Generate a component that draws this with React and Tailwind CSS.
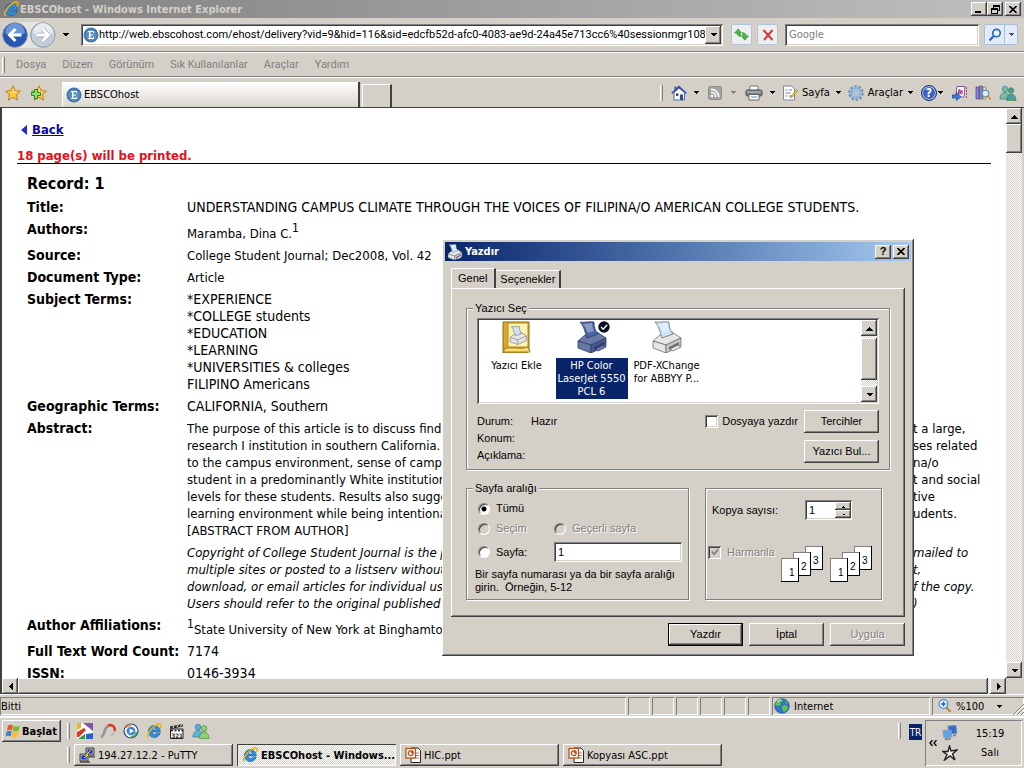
import React, { useState } from 'react';

const raised =
  'bg-[#d4d0c8] shadow-[inset_-1px_-1px_0_#404040,inset_1px_1px_0_#fff,inset_-2px_-2px_0_#808080]';
const sunken =
  'bg-white shadow-[inset_1px_1px_0_#808080,inset_-1px_-1px_0_#fff,inset_2px_2px_0_#404040,inset_-2px_-2px_0_#d4d0c8]';
const pane = 'shadow-[inset_1px_1px_0_#808080,inset_-1px_-1px_0_#fff]';
const dither = 'bg-[repeating-conic-gradient(#fff_0_25%,#d4d0c8_0_50%)] bg-[length:2px_2px]';
const disabledText = 'text-[#808080] [text-shadow:1px_1px_0_#fff]';

const subjects = [
  '*EXPERIENCE',
  '*COLLEGE students',
  '*EDUCATION',
  '*LEARNING',
  '*UNIVERSITIES & colleges',
  'FILIPINO Americans',
];

// each line is split where the print dialog stops covering it
const abstractLines = [
  ['The purpose of this article is to discuss findings from a study of Filipina/o American students a', 't a large,'],
  ['research I institution in southern California. The findings reveal themes from their respon', 'ses related'],
  ['to the campus environment, sense of campus involvement and the experience of a Filipi', 'na/o'],
  ['student in a predominantly White institution, as well as the need for greater suppor', 't and social'],
  ['levels for these students. Results also suggest that campuses can create a more effec', 'tive'],
  ['learning environment while being intentional about the needs of their college st', 'udents.'],
  ['[ABSTRACT FROM AUTHOR]', ''],
];

const copyrightLines = [
  ['Copyright of College Student Journal is the property of its publisher and may not be copied or e', 'mailed to'],
  ["multiple sites or posted to a listserv without the holder's express permission. Users may prin", 't,'],
  ['download, or email articles for individual use. No warranty is given about the accuracy o', 'f the copy.'],
  ['Users should refer to the original published version for the full abstract. (Copyright applies.', ')'],
];

const Caret = ({ dir = 'down', className = 'text-black' }) => {
  const shapes = {
    down: 'M0 2h7L3.5 5.5z',
    up: 'M0 5.5h7L3.5 2z',
    left: 'M5.5 0v7L2 3.5z',
    right: 'M2 0v7l3.5-3.5z',
  };
  return (
    <svg viewBox="0 0 7 7" className={`h-[7px] w-[7px] shrink-0 ${className}`} shapeRendering="crispEdges">
      <path d={shapes[dir]} fill="currentColor" />
    </svg>
  );
};

const Grip = () => <span className="h-4 w-[3px] shrink-0 self-center border-l border-r border-l-white border-r-[#808080]" />;

const ScrollButton = ({ dir, label }) => (
  <button type="button" aria-label={label} className={`flex h-4 w-4 shrink-0 items-center justify-center ${raised}`}>
    <Caret dir={dir} />
  </button>
);

const IeIcon = ({ className = 'h-4 w-4' }) => (
  <svg viewBox="0 0 16 16" className={`shrink-0 ${className}`}>
    <path
      d="M14.2 10.2c-.8 2.6-3 4.3-5.8 4.3-3.4 0-6-2.500-6-6s2.600-6 6-6c3.600 0 6 2.700 5.900 6.600H6c.1 1.500 1.100 2.500 2.500 2.500 1 0 1.700-.5 2.100-1.400zM6.100 7h4.600C10.500 5.700 9.700 5 8.500 5 7.200 5 6.300 5.700 6.100 7z"
      fill="#2d8fe0"
      stroke="#1257a8"
      strokeWidth=".6"
    />
    <path d="M2.300 14.700C.2 12.500 4.200 6 9 2.800c3-2 5.600-2.400 6-.8.300 1-.3 2.300-1 3.400" fill="none" stroke="#f0b400" strokeWidth="1.500" />
  </svg>
);

const EbscoIcon = () => (
  <svg viewBox="0 0 16 16" className="h-4 w-4 shrink-0">
    <circle cx="8" cy="8" r="7.500" fill="#3f76ae" />
    <circle cx="8" cy="8" r="5.800" fill="#5b8fc0" />
    <path d="M5 4h6v2h-1V5H7.500v2.500H10v1H7.500V11H10v-1h1v2H5v-1h1V5H5z" fill="#fff" />
  </svg>
);

const PrinterIcon = ({ body = '#e6e6e4', side = '#c4c6ca', edge = '#6a6e76', paper = '#cfe4fa', className = 'h-4 w-4' }) => (
  <svg viewBox="0 0 32 32" className={`shrink-0 ${className}`}>
    <path d="M2 20l7-6 12-3 9 6-15 7z" fill={body} stroke={edge} strokeWidth=".8" strokeLinejoin="round" />
    <path d="M2 20l13 4v8L2 27z" fill={body} stroke={edge} strokeWidth=".8" strokeLinejoin="round" />
    <path d="M15 24l15-7v8l-15 7z" fill={side} stroke={edge} strokeWidth=".8" strokeLinejoin="round" />
    <path d="M4 1c5 1 9-1 14 0 0 5 1 9 4 12l-11 4C9 11 8 5 4 1z" fill={paper} stroke={edge} strokeWidth=".8" />
    <path d="M7 3c4 0 6-1 9-1 0 3 1 6 2 8l-6 2C10 8 9 5 7 3z" fill="#fff" opacity=".35" />
    <path d="M18 26l10-5v3l-10 5z" fill={edge} />
    <path d="M19 28l8-4 3 2-8 4z" fill={body} stroke={edge} strokeWidth=".8" />
  </svg>
);

const FlatPrinter = () => (
  <svg viewBox="0 0 18 16" className="h-4 w-[18px] shrink-0">
    <path d="M5 1h8v5H5z" fill="#fff" stroke="#777" />
    <rect x="1" y="5" width="16" height="6" rx="1.500" fill="#7d8186" stroke="#4d5054" />
    <path d="M2 7h14" stroke="#c7cace" />
    <path d="M4 9.500h10V15H4z" fill="#fff" stroke="#666" />
    <path d="M6 12h6" stroke="#4b87d0" />
  </svg>
);

const Star = ({ plus }) => (
  <svg viewBox="0 0 16 16" className="h-4 w-4 shrink-0">
    <path d="M8 .8l2.200 4.900 5.200.5-3.900 3.600 1.100 5.300L8 12.400l-4.600 2.700 1.100-5.300L.6 6.200l5.200-.5z" fill="#ffc93c" stroke="#b9761a" strokeWidth=".9" />
    <path d="M8 3l1.300 3.500 3 .4-4.300 1z" fill="#fff1b0" />
    {plus && <path d="M3.500 4.500h3v3h3v3h-3v3h-3v-3h-3v-3h3z" fill="#8fe06f" stroke="#247a17" strokeWidth=".9" />}
  </svg>
);

const HomeIcon = () => (
  <svg viewBox="0 0 16 16" className="h-4 w-4 shrink-0">
    <path d="M3 7.500v7.500h10.500V7.500L8 3z" fill="#f3f6fd" stroke="#5a6fa5" />
    <path d="M3.500 1.500h2V6h-2z" fill="#3d5aa8" />
    <path d="M.8 8.500L8 1.700l7.300 6.800" fill="none" stroke="#2f4fae" strokeWidth="1.600" />
    <path d="M9 9.500h3V15H9z" fill="#2b4c9c" />
    <path d="M5 8.500h2.300v2.300H5z" fill="#333" />
  </svg>
);

const RssIcon = () => (
  <svg viewBox="0 0 14 14" className="h-[14px] w-[14px] shrink-0">
    <rect x=".5" y=".5" width="13" height="13" rx="2" fill="#a5a5a3" stroke="#878785" />
    <circle cx="4" cy="10" r="1.300" fill="#fff" />
    <path d="M3 6.200A4.800 4.800 0 0 1 7.800 11M3 3.200A7.800 7.800 0 0 1 10.800 11" fill="none" stroke="#fff" strokeWidth="1.400" />
  </svg>
);

const PageIcon = () => (
  <svg viewBox="0 0 16 16" className="h-4 w-4 shrink-0">
    <path d="M1.500 1h8l3 3v11h-11z" fill="#fff" stroke="#7887a5" />
    <path d="M3.500 5h2M7 5h3M3.500 8h5M3.500 11h2M7 11h3" stroke="#6c7fb0" />
    <path d="M14.500 4.500l-5 6-1 2.500 2.400-1.300 4.800-6z" fill="#f2cf4a" stroke="#8d7420" strokeWidth=".6" />
  </svg>
);

const GearIcon = () => (
  <svg viewBox="0 0 16 16" className="h-4 w-4 shrink-0">
    <circle cx="8" cy="8" r="6.600" fill="none" stroke="#6e93b9" strokeWidth="2.400" strokeDasharray="2.600 1.550" />
    <circle cx="8" cy="8" r="4.500" fill="#d9e6f2" stroke="#8fb2d6" strokeWidth="2.600" />
    <circle cx="8" cy="8" r="2.200" fill="#d4d0c8" stroke="#5f86ad" strokeWidth=".7" />
  </svg>
);

const HelpIcon = () => (
  <span className="flex h-4 w-4 shrink-0 items-center justify-center rounded-full border border-[#16307e] bg-[#3b62bd] text-xs leading-none font-bold text-white ring-1 ring-[#b9c7e8] ring-inset">
    ?
  </span>
);

const MessengerIcon = ({ left = '#5eb0dc', right = '#8fd070' }) => (
  <svg viewBox="0 0 18 16" className="h-4 w-[18px] shrink-0">
    <circle cx="6" cy="4" r="2.800" fill={left} stroke="#38789e" strokeWidth=".7" />
    <path d="M1 14c0-4 2-6.500 5-6.500S10 9 10 14z" fill={left} stroke="#38789e" strokeWidth=".7" />
    <circle cx="12" cy="5.500" r="2.800" fill={right} stroke="#4a8c3b" strokeWidth=".7" />
    <path d="M7.500 15.500c0-4 1.600-6.500 4.500-6.500s5 2.500 5 6.500z" fill={right} stroke="#4a8c3b" strokeWidth=".7" />
  </svg>
);

const ResearchIcon = () => (
  <svg viewBox="0 0 16 16" className="h-4 w-4 shrink-0">
    <path d="M1 2h3v12H1zM4.500 1h3v13h-3z" fill="#8b86c9" stroke="#4a4590" strokeWidth=".7" />
    <path d="M8 2h3v12H8z" fill="#e6e0c6" stroke="#857d58" strokeWidth=".7" />
    <circle cx="10.500" cy="8.500" r="3.400" fill="#d4f0f8" stroke="#5a7f92" />
    <path d="M13 11l2.500 3.500" stroke="#d08a2a" strokeWidth="1.800" />
  </svg>
);

const NoteIcon = () => (
  <svg viewBox="0 0 16 16" className="h-4 w-4 shrink-0">
    <path d="M5 1.500h8L12 12H3.500z" fill="#fff" stroke="#8a4fa0" />
    <path d="M6.500 9.500c0-5 1-6 1.500-3.500v3c1.500-5 2.500-4 2 .5" fill="none" stroke="#a03a9c" strokeWidth="1.200" />
    <path d="M14.500 2v11" stroke="#c05050" strokeDasharray="2 1" />
    <path d="M0 10h4.500V7.500L9 11.500l-4.500 4V13H0z" fill="#3d7be0" stroke="#1c4699" strokeWidth=".7" />
  </svg>
);

const PptIcon = () => (
  <svg viewBox="0 0 16 16" className="h-4 w-4 shrink-0">
    <path d="M6 1h7l2.500 2.500V15.500H6z" fill="#fff" stroke="#222" />
    <path d="M11 6h3M11 8.500h3M11 11h3" stroke="#888" />
    <rect x="1" y="1.500" width="9.500" height="9.500" fill="#fff" stroke="#b8501c" strokeWidth="1.300" />
    <circle cx="5.700" cy="6.200" r="2.400" fill="none" stroke="#b8501c" strokeWidth="1.300" />
    <path d="M5.700 6.200V3.500h2.700v2.700z" fill="#b8501c" />
  </svg>
);

const PuttyIcon = () => (
  <svg viewBox="0 0 16 16" className="h-4 w-4 shrink-0">
    <path d="M7 1h8v7H7z" fill="#b8b8b8" stroke="#222" strokeWidth=".8" />
    <path d="M8.500 2.500h5v4h-5z" fill="#1630c8" />
    <path d="M1 7h8v7H1z" fill="#b8b8b8" stroke="#222" strokeWidth=".8" />
    <path d="M2.500 8.500h5v4h-5z" fill="#1630c8" />
    <path d="M1 14.500h9.500v1.300H1zM10 9h5.500v1.300H10z" fill="#888" stroke="#222" strokeWidth=".5" />
    <path d="M12 3L7 8h2l-4 3" fill="none" stroke="#ffe600" />
  </svg>
);

const WindowsFlag = () => (
  <svg viewBox="0 0 16 16" className="h-4 w-4 shrink-0">
    <path d="M3 2.500c2-1 3.500-.8 5 0L7 7.500c-1.500-.8-3-1-5 0z" fill="#f0582a" />
    <path d="M8.800 2.800c1.800.9 3.500 1 6 0l-1.200 5c-2 1-4 .8-5.800 0z" fill="#7cb93a" />
    <path d="M1.700 8.500c2-1 3.500-.8 5 0l-1 5c-1.500-.8-3-1-5 0z" fill="#3c80d8" />
    <path d="M7.500 8.800c1.800.9 3.500 1 6 0l-1.200 5c-2 1-4 .8-5.800 0z" fill="#f8bf2c" />
  </svg>
);

const PicasaIcon = () => (
  <svg viewBox="0 0 16 16" className="h-4 w-4 shrink-0">
    <path d="M0 0h16v16H0z" fill="#fff" />
    <path d="M0 0h4v5L0 7z" fill="#e8b820" />
    <path d="M6 0h10v8z" fill="#8a52b0" />
    <path d="M0 9l7-4 2 2-7 7H0z" fill="#d8392b" />
    <path d="M1 16l7-5v5z" fill="#2f9a46" />
    <path d="M9 11l7-1v6H9z" fill="#2b62c8" />
  </svg>
);

const SwooshIcon = () => (
  <svg viewBox="0 0 16 16" className="h-4 w-4 shrink-0">
    <path d="M1 14c3-1 3-4 4-7s2-4 4-4" fill="none" stroke="#8d9399" strokeWidth="2.600" />
    <path d="M8 2.500c5-1.500 7.500 2 6.500 5.500" fill="none" stroke="#d8402c" strokeWidth="2.600" />
    <path d="M14.500 8c-.5 2.500-2 4-4 5" fill="none" stroke="#b9bcc0" strokeWidth="2" />
  </svg>
);

const PlayIcon = () => (
  <svg viewBox="0 0 16 16" className="h-4 w-4 shrink-0">
    <circle cx="8" cy="8" r="7" fill="#f2f4f7" stroke="#2b4d8c" strokeWidth="1.200" />
    <path d="M3 4.500A6 6 0 0 1 8 2" fill="none" stroke="#e8852a" strokeWidth="1.800" />
    <path d="M13.500 9A6 6 0 0 1 8 14" fill="none" stroke="#49a64a" strokeWidth="1.800" />
    <circle cx="8" cy="8" r="4.300" fill="#3d7fd8" />
    <path d="M6.600 5.500v5L11 8z" fill="#fff" />
  </svg>
);

const ClapperIcon = () => (
  <svg viewBox="0 0 16 16" className="h-4 w-4 shrink-0">
    <path d="M1.500 6h12.500v9.500H1.500z" fill="#f4f4ee" stroke="#222" />
    <path d="M1 3.500L13.500 1l.5 2.500L1.500 6z" fill="#222" />
    <path d="M4 5l1-2M8 4.200l1-2M11.500 3.500l1-2M3 7.500h10" stroke="#fff" />
    <path d="M2 7.500h12" stroke="#222" strokeWidth="1.500" strokeDasharray="2 1.500" />
    <text x="2.500" y="14.500" fontSize="6" fontWeight="bold" fill="#333">321</text>
  </svg>
);

const GlobeIcon = () => (
  <svg viewBox="0 0 16 16" className="h-4 w-4 shrink-0">
    <circle cx="8" cy="8" r="7.300" fill="#2f74c8" stroke="#1d4b8c" strokeWidth=".7" />
    <path d="M3 3c2-2 5-2 6-1L8 4 6 5l1 2-3 1-3-1zM8 8l4-1 2 2-1 3-3 2-2-3zM11 2l3 3-2 1z" fill="#5cc44a" />
    <path d="M3 4c1-1.500 3-2 4-2" stroke="#d9f2ff" fill="none" />
  </svg>
);

const MagnifierPlus = () => (
  <svg viewBox="0 0 14 14" className="h-[14px] w-[14px] shrink-0">
    <path d="M8 8l4.500 5" stroke="#c08436" strokeWidth="2" />
    <circle cx="5.500" cy="5" r="4.300" fill="#e4f3ff" stroke="#4a90d8" strokeWidth="1.300" />
    <path d="M5.500 2.800v4.400M3.300 5h4.400" stroke="#1d5fc0" strokeWidth="1.400" />
  </svg>
);

const NetworkIcon = () => (
  <svg viewBox="0 0 16 16" className="h-4 w-4 shrink-0">
    <path d="M6 1l8-.5.8 8L7 9z" fill="#2c6fd0" stroke="#7d8ea8" />
    <path d="M1 5.500l8-.5.600 7L2 13z" fill="#5ba4f0" stroke="#8b9bb3" />
    <path d="M3 14.500l6-.8M11 10.500h3" stroke="#777" strokeWidth="1.300" />
  </svg>
);

const StarFigure = () => (
  <svg viewBox="0 0 16 16" className="h-4 w-4 shrink-0">
    <path d="M7.500 1l1.500 5 6-1-4.500 4L13 15l-5-4-5.500 4L5 9.500 1 6.500h5z" fill="#f2f0ea" stroke="#222" strokeWidth="1.400" />
  </svg>
);

const CloseGlyph = () => (
  <svg viewBox="0 0 8 7" className="h-[7px] w-2">
    <path d="M.5 0l7 7M7.500 0l-7 7" stroke="#000" strokeWidth="1.600" />
  </svg>
);

const TitleBar = () => (
  <header className="flex h-[18px] shrink-0 items-center bg-linear-to-r from-[#808080] to-[#c0c0c0] pr-[3px] pl-[3px]">
    <IeIcon />
    <h1 className="ml-px flex-1 font-bold text-[#d4d0c8]">EBSCOhost - Windows Internet Explorer</h1>
    <div className="flex">
      <button type="button" aria-label="Minimize" className={`flex h-[14px] w-4 items-end px-1 pb-[3px] ${raised}`}>
        <span className="h-[2px] w-[6px] bg-black" />
      </button>
      <button type="button" aria-label="Restore" className={`flex h-[14px] w-4 items-center justify-center ${raised}`}>
        <svg viewBox="0 0 9 9" className="h-[9px] w-[9px]" shapeRendering="crispEdges">
          <path d="M2 0h7v6H7V5h1V2H3v1H2zM0 3h7v6H0zM1 5v3h5V5z" fillRule="evenodd" />
        </svg>
      </button>
      <button type="button" aria-label="Close" className={`ml-[2px] flex h-[14px] w-4 items-center justify-center ${raised}`}>
        <CloseGlyph />
      </button>
    </div>
  </header>
);

const NavBar = () => (
  <nav className="flex h-[34px] shrink-0 items-center border-b border-[#808080] pr-[6px] pl-[2px]">
    <div className="flex items-center gap-[2px] rounded-full bg-[#e6e4df]">
      <button type="button" aria-label="Back">
        <svg viewBox="0 0 26 26" className="h-[26px] w-[26px]">
          <circle cx="13" cy="13" r="12.300" fill="#2558b4" stroke="#7d8798" />
          <path d="M3 11a10 10 0 0 1 20 0c-5 3-15 3-20 0z" fill="#7ca8e4" opacity=".8" />
          <path d="M13.500 7L7.500 13l6 6M8 13h11.500" fill="none" stroke="#fff" strokeWidth="3" />
        </svg>
      </button>
      <button type="button" aria-label="Forward">
        <svg viewBox="0 0 26 26" className="h-[26px] w-[26px]">
          <circle cx="13" cy="13" r="12.300" fill="#c3cedb" stroke="#8d959f" />
          <path d="M3 11a10 10 0 0 1 20 0c-5 3-15 3-20 0z" fill="#e6ebf0" />
          <path d="M12.500 7l6 6-6 6M18 13H6.500" fill="none" stroke="#a3adb9" strokeWidth="4.400" />
          <path d="M12.500 7l6 6-6 6M18 13H6.500" fill="none" stroke="#fff" strokeWidth="3" />
        </svg>
      </button>
    </div>
    <button type="button" aria-label="Recent pages" className="mr-3 ml-[6px]"><Caret /></button>
    <div className={`flex h-[22px] min-w-0 flex-1 items-center p-[2px] ${sunken}`}>
      <EbscoIcon />
      <input
        aria-label="Address"
        readOnly
        value="http://web.ebscohost.com/ehost/delivery?vid=9&hid=116&sid=edcfb52d-afc0-4083-ae9d-24a45e713cc6%40sessionmgr108"
        className="min-w-0 flex-1 bg-transparent font-[Roboto,sans-serif] outline-none"
      />
      <button type="button" aria-label="Address list" className={`flex h-[18px] w-4 shrink-0 items-center justify-center ${raised}`}>
        <Caret />
      </button>
    </div>
    <button type="button" aria-label="Refresh" className="ml-2 flex h-[21px] w-[21px] items-center justify-center rounded-[2px] border border-[#b4c4d6] bg-[#eceef0]">
      <svg viewBox="0 0 16 16" className="h-[15px] w-[15px]">
        <path d="M4.500 2L.5 6.500H3c0 2 1.500 3.500 4 3.500V7.500c-1 0-1.500-.3-1.500-1H8z" fill="#4cb944" stroke="#23801f" strokeWidth=".6" />
        <path d="M11.500 14l4-4.500H13C13 7.500 11.500 6 9 6v2.500c1 0 1.500.3 1.500 1H8z" fill="#4cb944" stroke="#23801f" strokeWidth=".6" />
      </svg>
    </button>
    <button type="button" aria-label="Stop" className="ml-[5px] flex h-[21px] w-[21px] items-center justify-center rounded-[2px] border border-[#b4c4d6] bg-[#eceef0]">
      <svg viewBox="0 0 12 12" className="h-3 w-3"><path d="M1.500 1l9 10M10.500 1L2 11" stroke="#d03a3a" strokeWidth="2" /></svg>
    </button>
    <input
      type="text"
      aria-label="Search"
      placeholder="Google"
      className={`ml-[7px] h-[22px] w-[194px] px-1 outline-none placeholder:text-[#808080] ${sunken}`}
    />
    <div className="ml-[5px] flex h-[21px] rounded-[2px] border border-[#a9bfdc] bg-[#e3ebf6]">
      <button type="button" aria-label="Run search" className="flex w-5 items-center justify-center border-r border-[#a9bfdc]">
        <svg viewBox="0 0 14 14" className="h-[14px] w-[14px]">
          <circle cx="8.500" cy="5" r="3.700" fill="#f4f9ff" stroke="#2d66c4" strokeWidth="1.700" />
          <path d="M5.700 8L1.500 12.500" stroke="#2d66c4" strokeWidth="2.200" />
        </svg>
      </button>
      <button type="button" aria-label="Search options" className="flex w-3 items-center justify-center">
        <Caret className="scale-75 text-[#2d5aa0]" />
      </button>
    </div>
  </nav>
);

const MenuBar = () => (
  <div className="flex h-[25px] shrink-0 items-center border-t border-b border-t-white border-b-[#808080] pl-[2px]">
    <Grip />
    <div className="ml-[11px] flex gap-4 font-[Roboto,sans-serif] text-[#808080]">
      {['Dosya', 'Düzen', 'Görünüm', 'Sık Kullanılanlar', 'Araçlar', 'Yardım'].map((item) => (
        <button type="button" key={item}>{item}</button>
      ))}
    </div>
  </div>
);

const TabBar = () => (
  <div className="flex h-[30px] shrink-0 items-stretch border-t border-white pr-[7px] pl-[5px]">
    <div className="flex items-center gap-[10px]">
      <button type="button" aria-label="Favorites"><Star /></button>
      <button type="button" aria-label="Add favorite"><Star plus /></button>
    </div>
    <button
      type="button"
      className="mt-1 ml-[15px] flex w-[298px] items-center gap-[2px] border-r-2 border-[#404040] bg-linear-to-b from-white to-[#d9d6cf] pl-1 shadow-[inset_1px_1px_0_#fff]"
    >
      <EbscoIcon />
      EBSCOhost
    </button>
    <button type="button" aria-label="New tab" className="mt-[6px] ml-[2px] w-[30px] border-t border-r-2 border-l border-t-white border-r-[#404040] border-l-white" />
    <div className="ml-auto flex items-center">
      <Grip />
      <button type="button" className="ml-2 flex items-center gap-[6px]" aria-label="Home"><HomeIcon /><Caret className="scale-75 text-black" /></button>
      <button type="button" className="ml-2 flex items-center gap-2" aria-label="Feeds"><RssIcon /><Caret className="scale-75 text-[#808080]" /></button>
      <button type="button" className="ml-2 flex items-center gap-[6px]" aria-label="Print"><FlatPrinter /><Caret className="scale-75 text-black" /></button>
      <button type="button" className="ml-[6px] flex items-center gap-[4px]"><PageIcon />Sayfa<Caret className="ml-px scale-75 text-black" /></button>
      <button type="button" className="ml-[6px] flex items-center gap-[4px]"><GearIcon />Araçlar<Caret className="scale-75 text-black" /></button>
      <button type="button" className="ml-[7px] flex items-center" aria-label="Help"><HelpIcon /><Caret className="scale-75 text-black" /></button>
      <button type="button" className="ml-2" aria-label="Notes"><NoteIcon /></button>
      <button type="button" className="ml-[7px]" aria-label="Research"><ResearchIcon /></button>
      <button type="button" className="ml-2" aria-label="Messenger"><MessengerIcon left="#7cbfa0" right="#4a9aa8" /></button>
    </div>
  </div>
);

const Lines = ({ lines }) =>
  lines.map(([head, tail]) => (
    <div key={head} className="flex whitespace-nowrap">
      <span className="min-w-0 flex-1 overflow-hidden">{head}</span>
      <span className="w-[78px] shrink-0">{tail}</span>
    </div>
  ));

const Row = ({ label, size = 'text-[13px]', children }) => (
  <tr className="align-top">
    <th scope="row" className="w-40 p-0 pb-[5px] text-left font-bold whitespace-nowrap">{label}</th>
    <td className="p-0 pb-[5px]">
      <div className={`leading-[17px] ${size}`}>{children}</div>
    </td>
  </tr>
);

const RecordPage = () => (
  <main className="min-w-0 flex-1 overflow-hidden bg-white px-[15px] pt-[13px] text-[14px] leading-[17px]">
    <a href="#back" className="flex items-center gap-[5px] pl-1 text-[13px] leading-[17px] font-bold text-[#0a0aa0]">
      <svg viewBox="0 0 6 10" className="h-[10px] w-[6px]"><path d="M6 0v10L0 5z" fill="#2a2ad0" /></svg>
      <span className="underline">Back</span>
    </a>
    <p className="mt-[10px] border-b border-black text-[13px] leading-[15px] font-bold text-[#e01020]">18 page(s) will be printed.</p>
    <div className="pl-[10px]">
      <h2 className="pt-[10px] pb-[5px] text-base leading-5 font-bold">Record: 1</h2>
      <table className="w-full border-collapse">
        <tbody>
          <Row label="Title:" size="text-[14px]">
            UNDERSTANDING CAMPUS CLIMATE THROUGH THE VOICES OF FILIPINA/O AMERICAN COLLEGE STUDENTS.
          </Row>
          <Row label="Authors:">
            <div className="pt-1">Maramba, Dina C.<sup className="text-xs leading-none">1</sup></div>
          </Row>
          <Row label="Source:">College Student Journal; Dec2008, Vol. 42</Row>
          <Row label="Document Type:">Article</Row>
          <Row label="Subject Terms:" size="text-[14px]">
            {subjects.map((subject) => (
              <div key={subject}>{subject}</div>
            ))}
          </Row>
          <Row label="Geographic Terms:" size="text-[14px]">CALIFORNIA, Southern</Row>
          <Row label="Abstract:"><Lines lines={abstractLines} /></Row>
          <Row label=""><div className="italic"><Lines lines={copyrightLines} /></div></Row>
          <Row label="Author Affiliations:">
            <div className="pt-1"><sup className="text-xs leading-none">1</sup>State University of New York at Binghamton</div>
          </Row>
          <Row label="Full Text Word Count:" size="text-[14px]">7174</Row>
          <Row label="ISSN:" size="text-[14px]">0146-3934</Row>
        </tbody>
      </table>
    </div>
  </main>
);

const StatusBar = () => (
  <footer className="flex h-[24px] shrink-0 items-stretch gap-[2px] border-t border-b-2 border-white pt-[2px] pb-px">
    <div className={`flex flex-1 items-center pl-px ${pane}`}>Bitti</div>
    {[0, 1, 2, 3, 4, 5].map((n) => (
      <div key={n} className={`w-[22px] ${pane}`} />
    ))}
    <div className={`flex w-[158px] items-center gap-1 pl-[2px] ${pane}`}><GlobeIcon />Internet</div>
    <button type="button" className={`flex w-[92px] items-center gap-1 pl-[6px] ${pane}`}>
      <MagnifierPlus />
      %100
      <Caret className="ml-2 scale-75 text-black" />
      <svg viewBox="0 0 12 12" className="mt-auto ml-auto h-3 w-3">
        <path d="M1 12L12 1M5 12l7-7M9 12l3-3" stroke="#808080" />
        <path d="M2.200 12L12 2.200M6.200 12L12 6.200" stroke="#fff" />
      </svg>
    </button>
  </footer>
);

const tasks = [
  { title: '194.27.12.2 - PuTTY', icon: <PuttyIcon /> },
  { title: 'EBSCOhost - Windows...', icon: <IeIcon />, active: true },
  { title: 'HIC.ppt', icon: <PptIcon /> },
  { title: 'Kopyası ASC.ppt', icon: <PptIcon /> },
];

const Taskbar = () => (
  <div className="flex h-[50px] shrink-0 items-start py-[2px] pr-[2px] pl-[2px]">
    <button type="button" className={`flex h-[22px] w-[59px] items-center gap-[1px] pl-[3px] font-bold ${raised}`}>
      <WindowsFlag />
      Başlat
    </button>
    <div className="ml-[6px] flex flex-1 flex-col gap-[2px]">
      <div className="flex h-[22px] items-center gap-[7px]">
        <Grip />
        <PicasaIcon />
        <SwooshIcon />
        <PlayIcon />
        <IeIcon />
        <ClapperIcon />
        <MessengerIcon />
      </div>
      <div className="flex h-[22px] items-stretch gap-1">
        <Grip />
        {tasks.map((task) => (
          <button
            type="button"
            key={task.title}
            className={`flex w-[159px] items-center gap-[3px] pl-[5px] ${
              task.active ? `font-bold shadow-[inset_1px_1px_0_#404040,inset_-1px_-1px_0_#fff] ${dither}` : raised
            }`}
          >
            {task.icon}
            <span className="whitespace-nowrap">{task.title}</span>
          </button>
        ))}
      </div>
    </div>
    <div className="flex h-[22px] items-center"><Grip /></div>
    <span className="mt-[4px] ml-2 flex h-4 w-[13px] items-center justify-center overflow-hidden bg-[#0a246a] text-[10px] text-white">TR</span>
    <div className={`ml-[3px] flex h-[46px] w-[97px] items-center pl-1 ${pane}`}>
      <button type="button" aria-label="Show hidden icons" className="w-2">
        <svg viewBox="0 0 8 6" className="h-[6px] w-2"><path d="M3.500 0L1 3l2.500 3M7.500 0L5 3l2.500 3" fill="none" stroke="#000" strokeWidth="1.300" /></svg>
      </button>
      <div className="ml-[5px] flex flex-col gap-1"><NetworkIcon /><StarFigure /></div>
      <div className="flex flex-1 flex-col items-center gap-[6px]">
        <span>15:19</span>
        <span>Salı</span>
      </div>
    </div>
  </div>
);

const Button = ({ children, primary, ...rest }) => (
  <button
    type="button"
    className={`h-[23px] w-[75px] text-center disabled:text-[#808080] disabled:[text-shadow:1px_1px_0_#fff] ${raised} ${
      primary ? 'border border-black' : ''
    }`}
    {...rest}
  >
    {children}
  </button>
);

const Radio = ({ label, ...rest }) => (
  <label className="flex items-center gap-[6px]">
    <input
      type="radio"
      name="range"
      className="h-3 w-3 appearance-none rounded-full border border-[#808080] border-r-white border-b-white bg-white shadow-[inset_1px_1px_0_#404040] checked:bg-[radial-gradient(#000_2px,#fff_3px)] disabled:bg-[#d4d0c8]"
      {...rest}
    />
    <span className={rest.disabled ? disabledText : ''}>{label}</span>
  </label>
);

const groupBox = 'border border-[#808080] shadow-[1px_1px_0_#fff,inset_1px_1px_0_#fff]';

const Pages = () => (
  <svg viewBox="0 0 42 36" className="h-9 w-[42px]" shapeRendering="crispEdges">
    {[
      [24, 0, '3'],
      [12, 6, '2'],
      [0, 12, '1'],
    ].map(([x, y, n]) => (
      <g key={n}>
        <rect x={x} y={y} width="18" height="24" fill="#000" />
        <rect x={x} y={y} width="17" height="23" fill="#808080" />
        <rect x={x + 1} y={y + 1} width="16" height="22" fill="#fff" />
        <text x={x + 8} y={y + 18} fontSize="10">{n}</text>
      </g>
    ))}
  </svg>
);

const PrinterItem = ({ name, selected, children }) => (
  <button type="button" className="flex w-[75px] flex-col items-center">
    <span className="relative flex h-[38px] w-9 justify-center pt-px">{children}</span>
    <span className={`w-[72px] pt-px pb-px text-center text-[11px] leading-[13px] ${selected ? 'bg-[#0a246a] text-white' : ''}`}>
      {name}
    </span>
  </button>
);

const PrintDialog = () => {
  const [range, setRange] = useState('all');
  const [copies, setCopies] = useState('1');

  return (
    <section
      role="dialog"
      aria-label="Yazdır"
      className={`absolute top-[239px] left-[442px] w-[472px] p-[3px] pb-[10px] font-['Liberation_Sans',Arial,sans-serif] text-[11px] leading-[13px] ${raised}`}
    >
      <div className="flex h-[19px] items-center bg-linear-to-r from-[#0a246a] to-[#a6caf0] pr-[2px] pl-[2px]">
        <PrinterIcon />
        <h2 className="ml-[2px] flex-1 font-['DejaVu_Sans_Condensed','DejaVu_Sans',sans-serif] font-bold text-white">Yazdır</h2>
        <button type="button" aria-label="Help" className={`mr-[2px] flex h-[14px] w-4 items-center justify-center font-bold ${raised}`}>?</button>
        <button type="button" aria-label="Close" className={`flex h-[14px] w-4 items-center justify-center ${raised}`}>
          <CloseGlyph />
        </button>
      </div>

      <div className="mx-[6px] mt-[7px]">
        <div role="tablist" className="flex items-end">
          <button type="button" role="tab" aria-selected="true" className="h-5 border-t border-r-2 border-l border-t-white border-r-[#404040] border-l-white pr-[7px] pb-px pl-[6px]">
            Genel
          </button>
          <button type="button" role="tab" aria-selected="false" className="h-[18px] border-t border-r-2 border-t-white border-r-[#404040] pr-1 pl-1">
            Seçenekler
          </button>
        </div>

        <div className="px-[15px] pt-[14px] pb-[17px] shadow-[inset_-1px_-1px_0_#404040,inset_1px_1px_0_#fff,inset_-2px_-2px_0_#808080]">
          <fieldset className={`px-[10px] pb-[6px] ${groupBox}`}>
            <legend className="-ml-[4px] bg-[#d4d0c8] px-[2px]">Yazıcı Seç</legend>
            <div className={`mt-[3px] flex h-[86px] p-[2px] ${sunken}`}>
              <div className="flex flex-1 items-start font-['DejaVu_Sans_Condensed','DejaVu_Sans',sans-serif]">
                <PrinterItem name="Yazıcı Ekle">
                  <svg viewBox="0 0 32 32" className="h-8 w-8">
                    <path d="M2 1h26v29l-3 2H2z" fill="#d9a82e" stroke="#8d6a16" />
                    <path d="M7 2h20v24H7z" fill="#fdf3b0" stroke="#b48b22" />
                    <path d="M3 28c7-3 16 1 24-2l2 5H3z" fill="#f8dd70" stroke="#a37c1e" />
                    <g transform="translate(8 5) scale(.58)">
                      <path d="M2 20l7-6 12-3 9 6v8l-15 7-13-5z" fill="#e6e6e4" stroke="#6a6e76" />
                      <path d="M2 20l13 4 15-7M15 24v8" fill="none" stroke="#6a6e76" />
                      <path d="M4 1c5 1 9-1 14 0 0 5 1 9 4 12l-11 4C9 11 8 5 4 1z" fill="#cfe4fa" stroke="#6a6e76" />
                    </g>
                  </svg>
                </PrinterItem>
                <PrinterItem name="HP Color LaserJet 5550 PCL 6" selected>
                  <PrinterIcon className="h-8 w-8" body="#6878a4" side="#4a598a" edge="#2e3d6c" paper="#4a64a8" />
                  <svg viewBox="0 0 12 12" className="absolute top-px right-0 h-3 w-3">
                    <circle cx="6" cy="6" r="5.700" fill="#060c20" />
                    <path d="M3 6l2.200 2.300L9.200 3.800" fill="none" stroke="#fff" strokeWidth="1.300" />
                  </svg>
                </PrinterItem>
                <PrinterItem name="PDF-XChange for ABBYY P...">
                  <PrinterIcon className="h-8 w-8" />
                </PrinterItem>
              </div>
              <div className={`flex w-4 flex-col ${dither}`}>
                <ScrollButton dir="up" label="Scroll up" />
                <div className={`mt-[2px] h-[42px] ${raised}`} />
                <span className="flex-1" />
                <ScrollButton dir="down" label="Scroll down" />
              </div>
            </div>

            <div className="mt-[6px] flex items-start">
              <dl className="mt-[5px] grid grid-cols-[54px_1fr] gap-y-1">
                <dt>Durum:</dt>
                <dd>Hazır</dd>
                <dt>Konum:</dt>
                <dd />
                <dt>Açıklama:</dt>
                <dd />
              </dl>
              <label className="mt-[5px] mr-[6px] ml-auto flex items-center gap-1">
                <input type="checkbox" className={`h-[13px] w-[13px] appearance-none ${sunken}`} />
                Dosyaya yazdır
              </label>
              <div className="flex flex-col gap-[7px]">
                <Button>Tercihler</Button>
                <Button>Yazıcı Bul...</Button>
              </div>
            </div>
          </fieldset>

          <div className="mt-[12px] flex">
            <fieldset className={`h-[118px] w-[223px] pr-1 pl-2 ${groupBox}`}>
              <legend className="-ml-[2px] bg-[#d4d0c8] px-[2px]">Sayfa aralığı</legend>
              <div className="grid grid-cols-[76px_1fr] items-center gap-y-[7px] pt-[7px] pl-[3px]">
                <Radio label="Tümü" checked={range === 'all'} onChange={() => setRange('all')} />
                <span />
                <Radio label="Seçim" disabled />
                <Radio label="Geçerli sayfa" disabled />
                <Radio label="Sayfa:" checked={range === 'pages'} onChange={() => setRange('pages')} />
                <input type="text" aria-label="Sayfa numaraları" defaultValue="1" className={`h-5 w-32 px-1 outline-none ${sunken}`} />
              </div>
              <p className="mt-[6px] whitespace-pre-line">{'Bir sayfa numarası ya da bir sayfa aralığı\ngirin.\u00a0 Örneğin, 5-12'}</p>
            </fieldset>

            <div className={`mt-[6px] ml-4 h-28 w-[177px] pr-[9px] pl-[2px] ${groupBox}`}>
              <div className="mt-[11px] flex items-center">
                <label htmlFor="copies" className="ml-1 w-[93px]">Kopya sayısı:</label>
                <div className={`flex h-5 w-[47px] p-[2px] ${sunken}`}>
                  <input id="copies" type="text" value={copies} onChange={(e) => setCopies(e.target.value)} className="w-7 bg-transparent pl-[2px] outline-none" />
                  <div className="flex flex-col">
                    <button type="button" aria-label="More copies" className={`flex h-2 w-4 items-center justify-center ${raised}`}><Caret dir="up" className="scale-50 text-black" /></button>
                    <button type="button" aria-label="Fewer copies" className={`flex h-2 w-4 items-center justify-center ${raised}`}><Caret className="scale-50 text-black" /></button>
                  </div>
                </div>
              </div>
              <div className="mt-[26px] flex items-start">
                <label className={`relative flex items-center gap-[6px] ${disabledText}`}>
                  <input type="checkbox" defaultChecked disabled className="h-[13px] w-[13px] appearance-none bg-[#d4d0c8] shadow-[inset_1px_1px_0_#808080,inset_-1px_-1px_0_#fff,inset_2px_2px_0_#404040]" />
                  <svg viewBox="0 0 9 9" className="absolute top-[2px] left-[3px] h-2 w-2"><path d="M1 4l2.500 3L8 1.500" fill="none" stroke="#808080" strokeWidth="2" /></svg>
                  Harmanla
                </label>
                <div className="ml-auto flex gap-[7px]">
                  <Pages />
                  <Pages />
                </div>
              </div>
            </div>
          </div>
        </div>

        <div className="mt-[6px] flex justify-end gap-[6px]">
          <Button primary>Yazdır</Button>
          <Button>İptal</Button>
          <Button disabled>Uygula</Button>
        </div>
      </div>
    </section>
  );
};

const App = () => (
  <div className="relative flex h-screen flex-col overflow-hidden bg-[#d4d0c8] font-['DejaVu_Sans_Condensed','DejaVu_Sans',sans-serif] text-[11px] leading-[13px] text-black">
    <TitleBar />
    <NavBar />
    <MenuBar />
    <TabBar />
    <div className="flex min-h-0 flex-1 border-t border-l-2 border-[#404040] pr-[2px]">
      <div className="flex min-w-0 flex-1 flex-col">
        <RecordPage />
        <div className={`flex h-4 shrink-0 ${dither}`}>
          <ScrollButton dir="left" label="Scroll left" />
          <div className={`mr-[2px] flex-1 ${raised}`} />
          <ScrollButton dir="right" label="Scroll right" />
        </div>
      </div>
      <div className="flex w-4 flex-col">
        <div className={`flex flex-1 flex-col ${dither}`}>
          <ScrollButton dir="up" label="Scroll up" />
          <div className={`h-[29px] ${raised}`} />
          <span className="flex-1" />
          <ScrollButton dir="down" label="Scroll down" />
        </div>
        <span className="h-4" />
      </div>
    </div>
    <StatusBar />
    <Taskbar />
    <PrintDialog />
  </div>
);

export default App;
